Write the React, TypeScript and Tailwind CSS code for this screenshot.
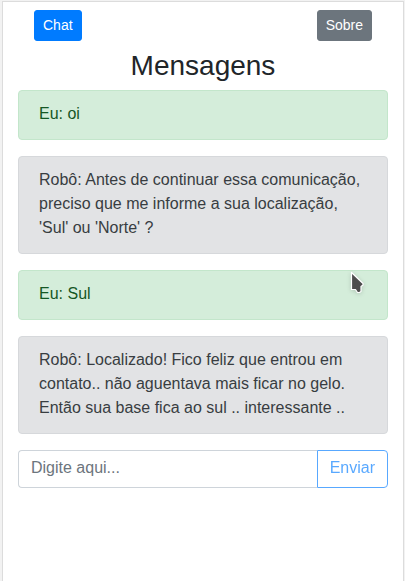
import { useState } from "react";

type Message = { author: "Eu" | "Robô"; text: string };

const messages: Message[] = [
  { author: "Eu", text: "oi" },
  {
    author: "Robô",
    text: "Antes de continuar essa comunicação, preciso que me informe a sua localização, 'Sul' ou 'Norte' ?",
  },
  { author: "Eu", text: "Sul" },
  {
    author: "Robô",
    text: "Localizado! Fico feliz que entrou em contato.. não aguentava mais ficar no gelo. Então sua base fica ao sul .. interessante ..",
  },
];

function MessageBox({ author, text }: Message) {
  const tone =
    author === "Eu"
      ? "border-[#c3e6cb] bg-[#d4edda] text-[#155724]"
      : "border-[#d6d8db] bg-[#e2e3e5] text-[#383d41]";
  return (
    <li className={`rounded-sm border px-5 pt-[11px] pb-[13px] ${tone}`}>
      {`${author}: ${text}`}
    </li>
  );
}

function Pointer() {
  return (
    <svg
      className="pointer-events-none absolute top-[270px] left-[349px] drop-shadow-sm"
      width="18"
      height="26"
      viewBox="0 0 18 26"
      aria-hidden="true"
    >
      <path
        d="M2.5 2.5V19.5H6.5L8.5 22.5H10.5L12 21.5V16.5L14 15V13.5Z"
        fill="#4d4d4d"
        stroke="#fff"
        strokeWidth="1.2"
        strokeLinejoin="round"
      />
    </svg>
  );
}

export default function App() {
  const [draft, setDraft] = useState("");

  return (
    <div className="relative flex min-h-screen flex-col bg-[#f2f2f2] pt-px pr-px pl-0.5 font-['Liberation_Sans',Arial,sans-serif] text-base text-[#212529]">
      <main className="grow border-x border-t border-[#dcdcdc] bg-white px-[15px] pt-2">
        <nav className="flex justify-between px-4">
          <button
            type="button"
            className="rounded-[3px] border border-[#007bff] bg-[#007bff] px-2 py-1 text-sm leading-[21px] text-white"
          >
            Chat
          </button>
          <button
            type="button"
            className="rounded-[3px] border border-[#6c757d] bg-[#6c757d] px-2 py-1 text-sm leading-[21px] text-white"
          >
            Sobre
          </button>
        </nav>
        <h1 className="mt-2 mb-2 text-center text-[28px] leading-[33px] font-normal">Mensagens</h1>
        <ul className="flex flex-col gap-4">
          {messages.map((message) => (
            <MessageBox key={message.text} {...message} />
          ))}
        </ul>
        <form className="mt-4 flex" onSubmit={(event) => event.preventDefault()}>
          <input
            type="text"
            aria-label="Mensagem"
            placeholder="Digite aqui..."
            value={draft}
            onChange={(event) => setDraft(event.target.value)}
            className="min-w-0 grow rounded-l-sm border border-r-0 border-[#ced4da] bg-white px-3 pt-[5px] pb-[7px] text-[#495057] placeholder:text-[#6c757d]"
          />
          <button
            type="submit"
            disabled={draft === ""}
            className="rounded-r-sm border border-[#007bff] px-3 pt-[5px] pb-[7px] text-[#007bff] disabled:opacity-65"
          >
            Enviar
          </button>
        </form>
      </main>
      <Pointer />
    </div>
  );
}
